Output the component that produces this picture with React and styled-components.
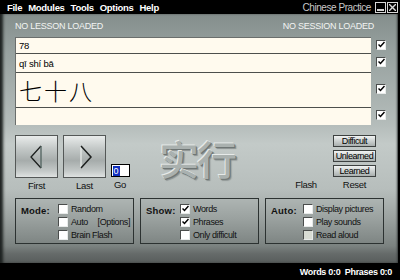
import React from "react";
import styled, { createGlobalStyle } from "styled-components";

const UI = '"Liberation Sans", Arial, sans-serif';

const Global = createGlobalStyle`
  html, body { margin: 0; padding: 0; background: #000; }
  body { width: 400px; height: 280px; overflow: hidden; font-family: ${UI}; }
`;

const Window = styled.div`
  width: 400px;
  height: 280px;
  background: #000;
  display: flex;
  flex-direction: column;
`;

const MenuBar = styled.div`
  height: 14px;
  display: flex;
  align-items: center;
  padding: 0 2px 0 7px;
  color: #fff;
  font-size: 9.5px;
  font-weight: bold;
`;

const MenuItem = styled.span`
  margin-right: 6px;
  letter-spacing: -0.3px;
`;

const Title = styled.span`
  margin-left: auto;
  font-weight: normal;
  color: #c8c8c8;
  font-size: 10px;
  margin-right: 3px;
  letter-spacing: -0.45px;
`;

const WinBtn = styled.span`
  width: 9px;
  height: 9px;
  border: 1px solid #d8d8d8;
  margin-left: 1px;
  display: flex;
  align-items: center;
  justify-content: center;
  background: #000;
`;

const Panel = styled.div`
  flex: 1;
  margin: 0 2px 0 0;
  display: flex;
  flex-direction: column;
  background: linear-gradient(
    to bottom,
    #848e8c 0px,
    #98a2a0 40px,
    #b4bcba 110px,
    #c3cac8 130px,
    #b7bebc 175px,
    #9aa19f 205px,
    #7b8280 232px,
    #656a69 240px,
    #585d5c 249px
  );
  box-shadow: inset 4px 0 3px -1px #1e2221, inset -2px 0 2px -1px #3a3e3d;
`;

const Inner = styled.div`
  padding: 0 12px 0 15px;
  display: flex;
  flex-direction: column;
`;

const Header = styled.div`
  height: 23px;
  display: flex;
  align-items: center;
  justify-content: space-between;
  padding-right: 12px;
  color: #f2f4f3;
  font-size: 9px;
  letter-spacing: -0.25px;
`;

const FieldArea = styled.div`
  display: flex;
  gap: 5px;
`;

const Fields = styled.div`
  width: 359px;
  background: #fffaee;
  border-top: 1px solid #6a6e6c;
  border-left: 1px solid #6a6e6c;
  display: flex;
  flex-direction: column;
`;

const Field = styled.div`
  height: ${(p) => p.h}px;
  border-bottom: ${(p) => (p.last ? "none" : "1px solid #4d4f4c")};
  display: flex;
  align-items: center;
  padding-left: 3px;
  font-size: ${(p) => p.fs}px;
  color: #000;
  font-family: ${(p) => (p.cjk ? '"Noto Sans CJK SC", sans-serif' : UI)};
  font-weight: ${(p) => (p.cjk ? 300 : "normal")};
  letter-spacing: ${(p) => (p.cjk ? "2px" : "-0.2px")};
`;

const Checks = styled.div`
  display: flex;
  flex-direction: column;
`;

const CheckSlot = styled.div`
  height: ${(p) => p.h}px;
  display: flex;
  align-items: center;
`;

const Box = styled.span`
  width: 8px;
  height: 8px;
  background: ${(p) => (p.disabled ? "#d8dcd4" : "#fff")};
  border-top: 1px solid #4a4d4c;
  border-left: 1px solid #4a4d4c;
  border-right: 1px solid #e8ebea;
  border-bottom: 1px solid #e8ebea;
  display: inline-flex;
  align-items: center;
  justify-content: center;
  flex: none;
`;

const Tick = () => (
  <svg width="7" height="7" viewBox="0 0 7 7">
    <path d="M0.5 3.5 L2.5 5.5 L6.5 1" fill="none" stroke="#000" strokeWidth="1.5" />
  </svg>
);

const CheckBox = ({ checked, disabled }) => (
  <Box disabled={disabled}>{checked && <Tick />}</Box>
);

const Controls = styled.div`
  margin-top: 10px;
  height: 63px;
  display: flex;
  align-items: flex-start;
`;

const NavCol = styled.div`
  display: flex;
  flex-direction: column;
  align-items: center;
  width: ${(p) => p.w}px;
  margin-right: ${(p) => p.mr}px;
`;

const NavButton = styled.div`
  width: 43px;
  height: 43px;
  box-sizing: border-box;
  border: 1px solid #545857;
  background: linear-gradient(to bottom, #e9eceb 0%, #c4c9c8 30%, #a6acab 60%, #c3c8c7 85%, #dfe2e1 100%);
  display: flex;
  align-items: center;
  justify-content: center;
`;

const Label = styled.div`
  font-size: 9.5px;
  letter-spacing: -0.3px;
  color: #111;
  margin-top: ${(p) => p.mt}px;
  height: 11px;
  line-height: 11px;
  text-align: center;
`;

const GoInput = styled.div`
  width: 16px;
  height: 11px;
  margin-top: 29px;
  background: #fff;
  border: 1px solid #000;
  font-size: 9px;
  line-height: 11px;
  padding-left: 1px;
  display: flex;
  align-items: center;
`;

const Caret = styled.span`
  background: #1030c0;
  color: #fff;
  padding: 0 1px;
  line-height: 10px;
`;

const Big = styled.div`
  flex: 1;
  font-family: "Noto Sans CJK SC", sans-serif;
  font-size: 40px;
  font-weight: 500;
  color: #aab1af;
  line-height: 46px;
  margin: 0 0 0 30px;
  text-shadow: -1px -1px 0 #e6eae9, 1px 1px 0 #6f7675, 2px 2px 1px #8b9190;
  letter-spacing: -2px;
`;

const FlashCol = styled.div`
  display: flex;
  flex-direction: column;
  margin-top: 44px;
  width: 38px;
  margin-right: 8px;
`;

const ResetCol = styled.div`
  display: flex;
  flex-direction: column;
  align-items: center;
  gap: 3px;
  width: 43px;
  margin-right: 10px;
`;

const SmallBtn = styled.div`
  width: 43px;
  height: 12px;
  box-sizing: border-box;
  border: 1px solid #3d4140;
  background: linear-gradient(to bottom, #f2f4f3 0%, #cfd4d3 45%, #a9afae 100%);
  font-size: 9px;
  letter-spacing: -0.45px;
  color: #000;
  display: flex;
  align-items: center;
  justify-content: center;
  line-height: 10px;
`;

const Groups = styled.div`
  display: flex;
  gap: 6px;
`;

const Group = styled.div`
  width: 119px;
  height: 46px;
  box-sizing: border-box;
  border: 1px solid #2c3231;
  display: flex;
  padding: 5px 0 0 5px;
`;

const GroupTitle = styled.div`
  font-size: 9.5px;
  font-weight: bold;
  color: #111;
  width: ${(p) => p.w}px;
  padding-top: 1px;
  letter-spacing: 0.2px;
`;

const Opts = styled.div`
  display: flex;
  flex-direction: column;
  gap: 4px;
  flex: 1;
`;

const Opt = styled.div`
  display: flex;
  align-items: center;
  height: 9px;
  font-size: 9px;
  letter-spacing: -0.4px;
  color: #111;
  gap: 3px;
  white-space: nowrap;
`;

const Extra = styled.span`
  margin-left: auto;
  margin-right: 3px;
`;

const Status = styled.div`
  height: 17px;
  display: flex;
  align-items: center;
  justify-content: flex-end;
  padding-right: 8px;
  color: #fff;
  font-size: 9px;
  font-weight: bold;
  letter-spacing: -0.3px;
`;

const LeftArrow = () => (
  <svg width="20" height="26" viewBox="0 0 20 26">
    <path d="M14 2 L4 13 L14 24" fill="none" stroke="#1c1f1e" strokeWidth="1.3" />
    <path d="M14 2 L14 24" fill="none" stroke="#50625e" strokeWidth="1.3" />
  </svg>
);

const RightArrow = () => (
  <svg width="20" height="26" viewBox="0 0 20 26">
    <path d="M6 2 L6 24" fill="none" stroke="#e8ecea" strokeWidth="1.3" />
    <path d="M6 2 L16 13 L6 24" fill="none" stroke="#1c1f1e" strokeWidth="1.5" />
  </svg>
);

export default function App() {
  return (
    <>
      <Global />
      <Window>
        <MenuBar>
          <MenuItem>File</MenuItem>
          <MenuItem>Modules</MenuItem>
          <MenuItem>Tools</MenuItem>
          <MenuItem>Options</MenuItem>
          <MenuItem>Help</MenuItem>
          <Title>Chinese Practice</Title>
          <WinBtn>
            <svg width="7" height="7" viewBox="0 0 7 7"><rect x="0" y="5" width="7" height="2" fill="#d8d8d8" /></svg>
          </WinBtn>
          <WinBtn>
            <svg width="7" height="7" viewBox="0 0 7 7"><path d="M0 0 L7 7 M7 0 L0 7" stroke="#d8d8d8" strokeWidth="1.4" /></svg>
          </WinBtn>
        </MenuBar>
        <Panel>
          <Inner>
            <Header>
              <span>NO LESSON LOADED</span>
              <span>NO SESSION LOADED</span>
            </Header>
            <FieldArea>
              <Fields>
                <Field h={15} fs={9.5}>78</Field>
                <Field h={18} fs={9.5}>qī shí bā</Field>
                <Field h={34} fs={23} cjk>七十八</Field>
                <Field h={17} fs={9.5} last></Field>
              </Fields>
              <Checks>
                <CheckSlot h={15}><CheckBox checked /></CheckSlot>
                <CheckSlot h={19}><CheckBox checked /></CheckSlot>
                <CheckSlot h={35}><CheckBox checked /></CheckSlot>
                <CheckSlot h={17}><CheckBox checked /></CheckSlot>
              </Checks>
            </FieldArea>
            <Controls>
              <NavCol w={43} mr={5}>
                <NavButton><LeftArrow /></NavButton>
                <Label mt={2}>First</Label>
              </NavCol>
              <NavCol w={43} mr={5}>
                <NavButton><RightArrow /></NavButton>
                <Label mt={2}>Last</Label>
              </NavCol>
              <NavCol w={18} mr={0}>
                <GoInput><Caret>0</Caret></GoInput>
                <Label mt={2}>Go</Label>
              </NavCol>
              <Big>实行</Big>
              <FlashCol>
                <Label mt={0}>Flash</Label>
              </FlashCol>
              <ResetCol>
                <SmallBtn>Difficult</SmallBtn>
                <SmallBtn>Unlearned</SmallBtn>
                <SmallBtn>Learned</SmallBtn>
                <Label mt={-1}>Reset</Label>
              </ResetCol>
            </Controls>
            <Groups>
              <Group>
                <GroupTitle w={37}>Mode:</GroupTitle>
                <Opts>
                  <Opt><CheckBox />Random</Opt>
                  <Opt><CheckBox />Auto<Extra>[Options]</Extra></Opt>
                  <Opt><CheckBox />Brain Flash</Opt>
                </Opts>
              </Group>
              <Group>
                <GroupTitle w={34}>Show:</GroupTitle>
                <Opts>
                  <Opt><CheckBox checked />Words</Opt>
                  <Opt><CheckBox checked />Phrases</Opt>
                  <Opt><CheckBox />Only difficult</Opt>
                </Opts>
              </Group>
              <Group>
                <GroupTitle w={32}>Auto:</GroupTitle>
                <Opts>
                  <Opt><CheckBox />Display pictures</Opt>
                  <Opt><CheckBox />Play sounds</Opt>
                  <Opt><CheckBox disabled />Read aloud</Opt>
                </Opts>
              </Group>
            </Groups>
          </Inner>
        </Panel>
        <Status>Words 0:0&nbsp; Phrases 0:0</Status>
      </Window>
    </>
  );
}
